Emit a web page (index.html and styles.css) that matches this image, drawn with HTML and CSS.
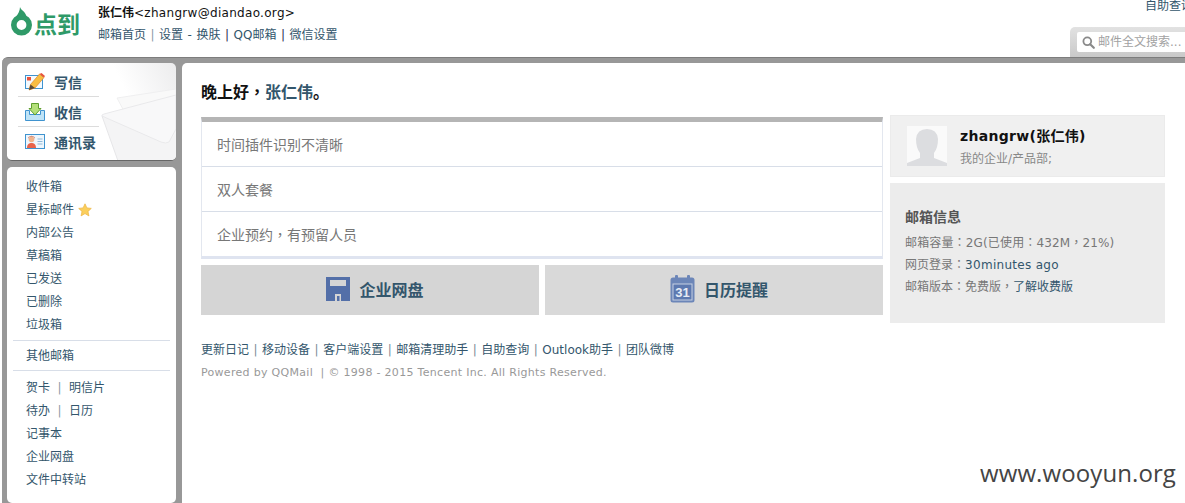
FILE: index.html
```html
<!DOCTYPE html>
<html lang="zh-CN">
<head>
<meta charset="utf-8">
<title>点到邮箱</title>
<link rel="stylesheet" href="styles.css">
</head>
<body>
<header class="top">
  <div class="logo">
    <svg class="logo-drop" width="21" height="29" viewBox="0 0 21 29"><path fill="#2f9a68" d="M9 0C9.500 3 15.500 5 15.500 10.500H4.500C7 7 9 4 9 0Z"/><circle cx="10.500" cy="18" r="7.700" fill="none" stroke="#2f9a68" stroke-width="5.600"/></svg>
    <span class="logo-text">点到</span>
  </div>
  <div class="account">
    <div class="account-name"><b>张仁伟</b><span class="latin">&lt;zhangrw@diandao.org&gt;</span></div>
    <nav class="account-links"><a>邮箱首页</a><i class="sep">|</i><a>设置</a><span class="dash">-</span><a>换肤</a><i class="sep dark">|</i><a>QQ邮箱</a><i class="sep dark">|</i><a>微信设置</a></nav>
  </div>
  <div class="top-right">
    <a class="help">自助查询</a>
    <div class="search-tab">
      <div class="search-box">
        <svg width="13" height="13" viewBox="0 0 13 13"><circle cx="5.300" cy="5.300" r="3.900" fill="none" stroke="#8a8a8a" stroke-width="1.800"/><path d="M8.200 8.200 11.800 11.800" stroke="#8a8a8a" stroke-width="2.200" stroke-linecap="round"/></svg>
        <span>邮件全文搜索...</span>
      </div>
    </div>
  </div>
</header>

<div class="frame">
  <aside class="side">
    <div class="panel quick">
      <svg class="envelope" width="81" height="98" viewBox="0 0 81 98">
        <path d="M22 35 81 26V60L30 50Z" fill="#f9f9f9" stroke="#efeff0"/>
        <path d="M7 53 72 80 81 70V98H23Z" fill="#f4f4f5"/>
        <path d="M7 53Q6 52 9 51L81 32V66L74 79Q71 81 66 79Z" fill="#f8f8f9" stroke="#e9e9eb"/>
        <path d="M7 53 23 98" fill="none" stroke="#e6e6e8"/>
      </svg>
      <a class="quick-row">
        <svg width="20" height="18" viewBox="0 0 20 18"><rect x=".5" y="2.500" width="17" height="13" fill="#f4fafe" stroke="#3f93cf"/><rect x="2" y="4" width="4" height="3.500" fill="#e8533c"/><path d="M4 17 5.500 11.500 14.500 1 19 4.500 10 15Z" fill="#f8bd42" stroke="#dc8a2c" stroke-width=".7"/><path d="M14.500 1 19 4.500 20 3 16.500 0Z" fill="#e8533c"/><path d="M4 17 5.500 11.500 10 15Z" fill="#5a4a3a"/></svg>
        <span>写信</span>
      </a>
      <a class="quick-row">
        <svg width="20" height="18" viewBox="0 0 20 18"><path d="M.5 7.500V17.500H19.500V7.500H15.500V11.500H4.500V7.500Z" fill="#bfe3f6" stroke="#3f93cf"/><path d="M6.500 .5H13.500V5.500H16L10 12 4 5.500H6.500Z" fill="#b4e07a" stroke="#5f9e2f"/></svg>
        <span>收信</span>
      </a>
      <a class="quick-row">
        <svg width="20" height="16" viewBox="0 0 20 16"><rect x=".5" y=".5" width="19" height="14" fill="#eef6fc" stroke="#3f93cf"/><circle cx="6.500" cy="5.500" r="2.800" fill="#f1b48c"/><path d="M3.500 5.500a3 3 0 0 1 6 0L9.500 3 6.500 1.800 3.500 3Z" fill="#c0492e"/><path d="M2 14c0-3.800 2.300-5 4.500-5s4.500 1.200 4.500 5Z" fill="#e8634a"/><path d="M12.500 5h5M12.500 7.500h5M12.500 10h5" stroke="#8fb8d8"/></svg>
        <span>通讯录</span>
      </a>
    </div>
    <div class="panel folders">
      <ul class="folder-group">
        <li>收件箱</li>
        <li>星标邮件<svg class="star" width="14" height="14" viewBox="0 0 14 14"><path d="M7 .8 8.900 4.900 13.300 5.400 10 8.400 10.900 12.900 7 10.600 3.100 12.900 4 8.400.7 5.400 5.100 4.900Z" fill="#fbcf5c" stroke="#ecb33f" stroke-width=".7"/></svg></li>
        <li>内部公告</li>
        <li>草稿箱</li>
        <li>已发送</li>
        <li>已删除</li>
        <li>垃圾箱</li>
      </ul>
      <ul class="folder-group">
        <li>其他邮箱</li>
      </ul>
      <ul class="folder-group last">
        <li>贺卡<i class="pipe">|</i>明信片</li>
        <li>待办<i class="pipe">|</i>日历</li>
        <li>记事本</li>
        <li>企业网盘</li>
        <li>文件中转站</li>
      </ul>
    </div>
  </aside>

  <main class="panel main">
    <h1 class="greet">晚上好<span class="punct" lang="zh-TW">，</span><a>张仁伟</a>。</h1>
    <div class="content">
      <div class="content-left">
        <ul class="notices">
          <li>时间插件识别不清晰</li>
          <li>双人套餐</li>
          <li>企业预约<span class="punct" lang="zh-TW">，</span>有预留人员</li>
        </ul>
        <div class="tiles">
          <a class="tile">
            <svg width="24" height="24" viewBox="0 0 24 24"><path fill="#536fa8" fill-rule="evenodd" d="M0 0H24V24H0ZM4 3V9H20V3ZM9 17V24H15V17Z"/><rect x="11" y="19" width="2.500" height="5" fill="#536fa8"/></svg>
            <span>企业网盘</span>
          </a>
          <a class="tile">
            <svg width="25" height="28" viewBox="0 0 25 28"><rect x=".5" y="2.500" width="24" height="25" rx="2.500" fill="#6c86b8"/><rect x="5" y="0" width="3" height="5" rx="1" fill="#6c86b8"/><rect x="17" y="0" width="3" height="5" rx="1" fill="#6c86b8"/><rect x="3" y="9" width="19" height="16" fill="#5d79b0" stroke="#c6d0e2"/><text x="12.500" y="22" font-family="Liberation Sans, sans-serif" font-size="13" fill="#e6ebf5" text-anchor="middle">31</text></svg>
            <span>日历提醒</span>
          </a>
        </div>
      </div>
      <div class="content-right">
        <section class="profile">
          <div class="avatar">
            <svg width="40" height="40" viewBox="0 0 40 40"><rect width="40" height="40" fill="#fafafa"/><path d="M0 40V37L13 32V27Q9 22 9 13 10 3 20 3 30 3 31 13 31 22 27 27V32L40 37V40Z" fill="#dcdde0"/></svg>
          </div>
          <div>
            <div class="profile-name">zhangrw(张仁伟)</div>
            <div class="profile-dept">我的企业/产品部;</div>
          </div>
        </section>
        <section class="mailinfo">
          <h2>邮箱信息</h2>
          <p class="tight">邮箱容量<span class="punct" lang="zh-TW">：</span>2G(已使用<span class="punct" lang="zh-TW">：</span>432M<span class="punct" lang="zh-TW">，</span>21%)</p>
          <p>网页登录<span class="punct" lang="zh-TW">：</span><a class="latin">30minutes ago</a></p>
          <p>邮箱版本<span class="punct" lang="zh-TW">：</span>免费版<span class="punct" lang="zh-TW">，</span><a>了解收费版</a></p>
        </section>
      </div>
    </div>
    <nav class="foot-links"><a>更新日记</a><i>|</i><a>移动设备</a><i>|</i><a>客户端设置</a><i>|</i><a>邮箱清理助手</a><i>|</i><a>自助查询</a><i>|</i><a>Outlook助手</a><i>|</i><a>团队微博</a></nav>
    <p class="copyright">Powered by QQMail &nbsp;| © 1998 - 2015 Tencent Inc. All Rights Reserved.</p>
  </main>
</div>
<div class="watermark">www.wooyun.org</div>
</body>
</html>
```

FILE: styles.css
```css
* { box-sizing: border-box; }
html, body { margin: 0; height: 503px; overflow: hidden; background: #fff; }
body {
  position: relative;
  font: 12px/1.4 "DejaVu Sans", "Noto Sans CJK SC", sans-serif;
  color: #33566c;
}
ul { list-style: none; margin: 0; padding: 0; }
i { font-style: normal; }
a { color: inherit; }
.punct { font-family: "Noto Sans CJK TC", sans-serif; }
.latin { letter-spacing: .3px; }
.tight { letter-spacing: .15px; }

.top { display: flex; height: 57px; }
.logo { display: flex; align-items: flex-start; gap: 2px; width: 98px; padding: 7px 0 0 11px; }
.logo-drop { flex: none; }
.logo-text {
  font: 700 23px/28px "Noto Sans CJK SC", sans-serif;
  color: #2f9a68;
  margin-top: 2px;
  white-space: nowrap;
}
.account { padding-top: 5px; }
.account-name { color: #111; line-height: 17px; }
.account-name b { font-weight: 700; }
.account-links { margin-top: 3px; line-height: 20px; white-space: nowrap; }
.sep { margin: 0 4.500px; color: #8a9aa6; }
.sep.dark { color: #2a2a50; margin: 0 4.500px; }
.dash { margin: 0 4.500px; }

.top-right {
  margin-left: auto;
  width: 115px;
  display: flex;
  flex-direction: column;
  justify-content: space-between;
  overflow: hidden;
}
.help { padding-left: 75px; line-height: 12px; white-space: nowrap; }
.search-tab {
  height: 30px;
  padding: 5px 0 5px 7px;
  background: linear-gradient(#e2e2e2, #c9c9c9);
  border-radius: 5px 0 0 0;
}
.search-box {
  display: flex;
  align-items: center;
  gap: 3px;
  height: 20px;
  width: 125px;
  padding-left: 5px;
  background: #fff;
  border-radius: 2px;
  color: #a2a2a2;
  white-space: nowrap;
}

.frame {
  display: grid;
  grid-template-columns: 169px 1fr;
  gap: 6px;
  height: 446px;
  margin-left: 2px;
  padding: 5px 0 0 5px;
  background: #989898;
  border-top: 1px solid #7d7d7d;
  border-radius: 6px 0 0 0;
  overflow: hidden;
}
.side { display: flex; flex-direction: column; gap: 6px; min-height: 0; }
.panel { background: #fff; border-radius: 5px; }

.quick {
  position: relative;
  flex: none;
  height: 98px;
  padding: 4px 0 0 11px;
  overflow: hidden;
  border-bottom: 1px solid #666;
  background: linear-gradient(245deg, #ececed 0, #fff 30%);
}
.envelope { position: absolute; right: 0; top: 0; }
.quick-row {
  position: relative;
  display: flex;
  align-items: center;
  gap: 9px;
  width: 81px;
  height: 30px;
  padding-left: 7px;
  border-bottom: 1px solid #dcdcdc;
  font: 700 14px/20px "Noto Sans CJK SC", sans-serif;
  color: #33566c;
  white-space: nowrap;
}
.quick-row:last-of-type { border-bottom: 0; }
.quick-row svg { flex: none; width: 20px; }

.folders { flex: 1; padding: 9px 6px 0; }
.folder-group { padding: 0 13px 3px; margin-bottom: 4px; border-bottom: 1px solid #d8dee8; }
.folder-group + .folder-group { padding-bottom: 2px; }
.folder-group.last { border-bottom: 0; margin-top: 6px; }
.folder-group li { display: flex; align-items: center; height: 23px; white-space: nowrap; }
.star { margin: 0 0 2px 4px; }
.pipe { margin: 0 7.500px; color: #8a9aa6; }

.main { padding: 17px 0 0 19px; min-width: 0; border-radius: 5px 0 0 0; }
.greet {
  margin: 0 0 15px;
  font: 700 16px/22px "Noto Sans CJK SC", sans-serif;
  color: #111;
}
.greet a { color: #33566c; }
.content { display: flex; gap: 7px; align-items: flex-start; }
.content-left { width: 682px; }
.notices {
  border: 1px solid #e3e7ef;
  border-top: 5px solid #b5b5b5;
  border-bottom: 3px solid #dfe4f0;
}
.notices li {
  height: 45px;
  line-height: 44px;
  padding-left: 15px;
  font-size: 14px;
  font-family: "Noto Sans CJK SC", sans-serif;
  color: #777;
  border-bottom: 1px solid #d8dee8;
}
.notices li:last-child { border-bottom: 0; height: 44px; }
.tiles { display: flex; gap: 6px; margin-top: 6px; }
.tile {
  flex: 0 0 338px;
  height: 50px;
  display: flex;
  align-items: center;
  justify-content: center;
  gap: 9px;
  padding: 0 0 2px 10px;
  background: #d5d5d5;
  font: 700 16px/20px "Noto Sans CJK SC", sans-serif;
  color: #33566c;
}
.tile + .tile { background: #d9d9d9; }
.content-right { display: flex; flex-direction: column; gap: 6px; width: 275px; margin-top: -2px; }
.profile {
  display: flex;
  gap: 13px;
  height: 62px;
  padding: 10px 16px;
  background: #f0f0f0;
  border: 1px solid #ebebeb;
}
.avatar { width: 40px; height: 40px; flex: none; }
.profile-name { font-weight: 700; font-size: 14px; letter-spacing: .3px; line-height: 20px; color: #111; }
.profile-dept { margin-top: 5px; line-height: 16px; color: #888; font-size: 12px; }
.mailinfo { height: 140px; padding: 23px 15px 0; background: #ececec; color: #777; }
.mailinfo h2 { margin: 0 0 5px; font: 700 14px/20px "Noto Sans CJK SC", sans-serif; color: #555; }
.mailinfo p { margin: 0; height: 22px; line-height: 22px; white-space: nowrap; }
.mailinfo a { color: #33566c; }

.foot-links { margin-top: 18px; line-height: 18px; white-space: nowrap; }
.foot-links i { margin: 0 4.500px; color: #7b8c98; }
.copyright { margin: 6px 0 0; font-size: 11px; letter-spacing: .3px; line-height: 16px; color: #999; white-space: nowrap; }

.watermark {
  position: absolute;
  right: 9px;
  top: 458px;
  font-family: "Open Sans", sans-serif;
  font-size: 24px;
  letter-spacing: .1px;
  line-height: 30px;
  color: #444;
}
```
